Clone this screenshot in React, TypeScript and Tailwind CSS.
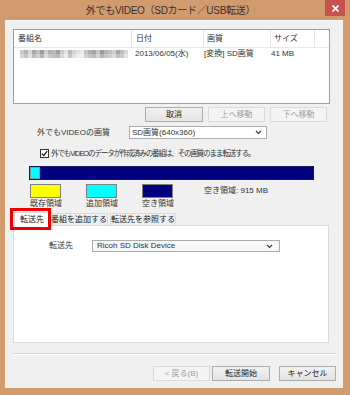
import React from 'react';

const font = { fontFamily: '"Liberation Sans", "Noto Sans CJK JP", sans-serif' };

const mosaicTop = [
  '#c8c8c8', '#b4b4b4', '#d8d8d8', '#a8a8a8', '#c0c0c0', '#9c9c9c', '#d0d0d0', '#b0b0b0', '#bcbcbc',
  '#a0a0a0', '#cccccc', '#e0e0e0', '#b8b8b8', '#d4d4d4', '#e4e4e4', '#ececec', '#c4c4c4', '#b0b0b0',
  '#a4a4a4', '#c8c8c8', '#9c9c9c', '#b4b4b4', '#c0c0c0', '#d0d0d0', '#a8a8a8', '#bcbcbc', '#d8d8d8',
];
const mosaicBottom = [
  '#d4d4d4', '#c4c4c4', '#e0e0e0', '#bcbcbc', '#d0d0d0', '#b4b4b4', '#dcdcdc', '#c8c8c8', '#c0c0c0',
  '#b8b8b8', '#d8d8d8', '#ececec', '#c8c8c8', '#e0e0e0', '#efefef', '#f0f0f0', '#d0d0d0', '#c4c4c4',
  '#bcbcbc', '#d4d4d4', '#b4b4b4', '#c8c8c8', '#d0d0d0', '#dcdcdc', '#c0c0c0', '#cccccc', '#e4e4e4',
];

const Chevron = () => (
  <svg width="7" height="5" viewBox="0 0 7 5" className="shrink-0">
    <path d="M1 1 L3.5 3.5 L6 1" fill="none" stroke="#404040" strokeWidth="1.2" />
  </svg>
);

const Button = ({ label, disabled, w }: { label: string; disabled?: boolean; w: string }) => (
  <div
    className={`${w} h-[15px] flex items-center justify-center text-[8px] border ${
      disabled
        ? 'border-[#d9d9d9] bg-[#f4f4f4] text-[#a0a0a0]'
        : 'border-[#acacac] bg-gradient-to-b from-[#f2f2f2] to-[#e3e3e3] text-[#222]'
    }`}
  >
    {label}
  </div>
);

const Legend = ({ color, label }: { color: string; label: string }) => (
  <div className="flex flex-col w-[31px]">
    <div className={`h-[14px] border border-[#808080] ${color}`} />
    <div className="mt-[1px] text-[8px] leading-[10px] text-[#333] whitespace-nowrap">{label}</div>
  </div>
);

export default function App() {
  return (
    <div className="w-[350px] h-[395px] bg-[#d29b6d] flex flex-col overflow-hidden" style={font}>
      {/* title bar */}
      <div className="relative h-[20px] shrink-0 flex items-center justify-center pr-[9px]">
        <span className="text-[10px] text-[#333] tracking-[-0.3px]">外でもVIDEO（SDカード／USB転送）</span>
        <div className="absolute right-[5px] top-0 w-[20px] h-[16px] bg-[#c75050] flex items-center justify-center">
          <svg width="7" height="7" viewBox="0 0 7 7">
            <path d="M0.5 0.5 L6.5 6.5 M6.5 0.5 L0.5 6.5" stroke="#fff" strokeWidth="1.6" />
          </svg>
        </div>
      </div>

      {/* client area */}
      <div className="ml-[5px] mr-[7px] mb-[7px] flex-1 bg-[#f0f0f0] border-l border-t border-[#f8f8f8] flex flex-col pl-[7px] text-[#222]">
        {/* list */}
        <div className="mt-[8px] w-[317px] h-[75px] border border-[#9a9ea6] bg-white flex flex-col">
          <div className="h-[18px] flex items-center border-b border-[#e8e8e8] text-[8px] text-[#333]">
            <div className="w-[118px] h-full pl-[4px] flex items-center border-r border-[#e5e5e5]">番組名</div>
            <div className="w-[72px] h-full pl-[4px] flex items-center border-r border-[#e5e5e5]">日付</div>
            <div className="w-[67px] h-full pl-[3px] flex items-center border-r border-[#e5e5e5]">画質</div>
            <div className="w-[44px] h-full pl-[3px] flex items-center border-r border-[#e5e5e5]">サイズ</div>
          </div>
          <div className="h-[11px] flex items-center text-[8px] text-[#333]">
            <div className="w-[118px] pl-[6px] flex flex-col">
              <div className="flex blur-[0.6px]">
                {mosaicTop.map((c, i) => (
                  <span key={i} className="w-[4px] h-[4px]" style={{ background: c }} />
                ))}
              </div>
              <div className="flex blur-[0.6px]">
                {mosaicBottom.map((c, i) => (
                  <span key={i} className="w-[4px] h-[4px]" style={{ background: c }} />
                ))}
              </div>
            </div>
            <div className="w-[72px] pl-[3px]">2013/06/05(水)</div>
            <div className="w-[67px]">[変換] SD画質</div>
            <div className="w-[44px]">41 MB</div>
          </div>
        </div>

        {/* move buttons */}
        <div className="mt-[3px] ml-[132px] flex gap-[5px]">
          <Button label="取消" w="w-[58px]" />
          <Button label="上へ移動" w="w-[57px]" disabled />
          <Button label="下へ移動" w="w-[57px]" disabled />
        </div>

        {/* quality */}
        <div className="mt-[4px] flex items-center h-[13px]">
          <div className="ml-[24px] w-[92px] text-[8px] text-[#333]">外でもVIDEOの画質</div>
          <div className="w-[138px] h-[13px] border border-[#acacac] bg-white flex items-center justify-between pl-[2px] pr-[4px] text-[8px] text-[#333]">
            <span>SD画質(640x360)</span>
            <Chevron />
          </div>
        </div>

        {/* checkbox */}
        <div className="mt-[9px] ml-[27px] flex items-center gap-[2px]">
          <div className="w-[9px] h-[9px] border border-[#333] bg-white flex items-center justify-center">
            <svg width="7" height="7" viewBox="0 0 7 7">
              <path d="M0.8 3.6 L2.7 5.6 L6.2 1.2" fill="none" stroke="#222" strokeWidth="1.3" />
            </svg>
          </div>
          <span className="text-[7.5px] text-[#333] tracking-[-1.1px]">外でもVIDEOのデータが作成済みの番組は、その画質のまま転送する。</span>
        </div>

        {/* capacity bar */}
        <div className="mt-[7px] ml-[16px] w-[285px] h-[14px] bg-[#000080] border border-[#1a1a5a] flex">
          <div className="w-[10px] h-full bg-[#00ffff] border border-[#5fa8b0]" />
        </div>

        {/* legend */}
        <div className="mt-[4px] ml-[17px] flex items-start">
          <Legend color="bg-[#ffff00]" label="既存領域" />
          <div className="ml-[25px]">
            <Legend color="bg-[#00ffff]" label="追加領域" />
          </div>
          <div className="ml-[25px]">
            <Legend color="bg-[#000080]" label="空き領域" />
          </div>
          <div className="ml-[31px] h-[14px] flex items-center text-[8px] text-[#333]">空き領域: 915 MB</div>
        </div>

        {/* tabs */}
        <div className="relative mt-[3px] flex items-end h-[13px]">
          <div className="ml-[1px] w-[36px] h-[14px] bg-white border border-b-0 border-[#d9d9d9] flex items-center justify-center text-[8px] text-[#222] z-10 -mb-[1px]">
            転送先
          </div>
          <div className="w-[58px] h-[12px] bg-[#f0f0f0] border border-b-0 border-[#d9d9d9] flex items-center justify-center text-[8px] text-[#222]">
            番組を追加する
          </div>
          <div className="ml-[2px] w-[66px] h-[12px] bg-[#f0f0f0] border border-b-0 border-[#d9d9d9] flex items-center justify-center text-[8px] text-[#222]">
            転送先を参照する
          </div>
          <div className="absolute left-[-3px] top-[-4px] w-[41px] h-[22px] border-[3px] border-[#ee0000] z-20" />
        </div>

        {/* tab panel */}
        <div className="w-[316px] h-[118px] bg-white border border-[#d9d9d9] flex flex-col">
          <div className="mt-[14px] flex items-center">
            <div className="ml-[35px] w-[43px] text-[8px] text-[#333]">転送先</div>
            <div className="w-[188px] h-[12px] border border-[#acacac] bg-[#f7f7f7] flex items-center justify-between pl-[4px] pr-[6px] text-[8px] text-[#333]">
              <span>Ricoh SD Disk Device</span>
              <Chevron />
            </div>
          </div>
        </div>

        {/* separator */}
        <div className="mt-[10px] w-[322px] h-[2px] border-t border-[#d5d5d5] border-b border-b-white" />

        {/* bottom buttons */}
        <div className="mt-[11px] ml-[140px] flex">
          <Button label="< 戻る(B)" w="w-[57px]" disabled />
          <div className="ml-[2px]">
            <Button label="転送開始" w="w-[58px]" />
          </div>
          <div className="ml-[9px]">
            <Button label="キャンセル" w="w-[57px]" />
          </div>
        </div>
      </div>
    </div>
  );
}
